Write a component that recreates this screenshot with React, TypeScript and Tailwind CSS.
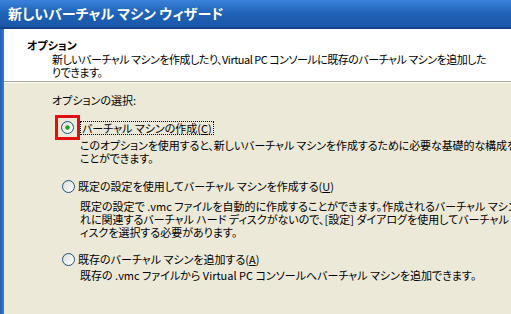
import React from "react";

const font = { fontFamily: '"Noto Sans CJK JP", "Noto Sans", sans-serif', fontFeatureSettings: '"palt"' };

function Radio({ checked }: { checked?: boolean }) {
  return (
    <svg width="13" height="13" viewBox="0 0 13 13">
      <defs>
        <linearGradient id="rg" x1="0" y1="0" x2="1" y2="1">
          <stop offset="0" stopColor="#dcdcd6" />
          <stop offset="1" stopColor="#ffffff" />
        </linearGradient>
      </defs>
      <circle cx="6.5" cy="6.5" r="6" fill="url(#rg)" stroke="#1c5180" strokeWidth="1" />
      {checked && <circle cx="6.5" cy="6.5" r="2.3" fill="#21a121" />}
    </svg>
  );
}

export default function App() {
  return (
    <div className="w-[511px] h-[314px] overflow-hidden flex flex-col bg-[#ece9d8] text-[11px] leading-[13px] text-black" style={font}>
      <div className="h-[29px] shrink-0 flex items-center pl-[8px] bg-gradient-to-b from-[#3a82dc] via-[#1f62b6] to-[#1a57a8] border-b-[2px] border-[#15408a]">
        <span className="text-white font-bold text-[14px]">新しいバーチャル マシン ウィザード</span>
      </div>
      <div className="flex flex-1 min-h-0">
        <div className="w-[4px] shrink-0 bg-gradient-to-r from-[#1f5fb8] to-[#3a7ad0]" />
        <div className="flex-1 flex flex-col min-w-0">
          <div className="h-[53px] bg-white shrink-0 pt-[10px] pl-[23px] border-b border-[#a6a397] whitespace-nowrap">
            <div className="font-bold">オプション</div>
            <div className="pl-[25px] mt-[1px] tracking-[-0.5px]">
              <div>新しいバーチャル マシンを作成したり、Virtual PC コンソールに既存のバーチャル マシンを追加した</div>
              <div>りできます。</div>
            </div>
          </div>
          <div className="border-t border-white flex-1 pl-[48px] pt-[11px] whitespace-nowrap">
            <div>オプションの選択:</div>
            <div className="mt-[8px] flex items-center">
              <div className="w-[25px] h-[25px] border-[3px] border-[#e01010] flex items-center justify-center ml-[3px]">
                <Radio checked />
              </div>
              <span className="ml-[0px] border border-dotted border-black px-[1px] leading-[12px]">バーチャル マシンの作成(<span className="underline">C</span>)</span>
            </div>
            <div className="pl-[28px] -mt-[1px] tracking-[-0.1px]">
              <div>このオプションを使用すると、新しいバーチャル マシンを作成するために必要な基礎的な構成を</div>
              <div>ことができます。</div>
            </div>
            <div className="mt-[15px] flex items-center pl-[10px]">
              <Radio />
              <span className="ml-[3px]">既定の設定を使用してバーチャル マシンを作成する(<span className="underline">U</span>)</span>
            </div>
            <div className="pl-[28px] mt-[7px]">
              <div>既定の設定で .vmc ファイルを自動的に作成することができます。作成されるバーチャル マシン</div>
              <div>れに関連するバーチャル ハード ディスクがないので、[設定] ダイアログを使用してバーチャル ハ</div>
              <div>ィスクを選択する必要があります。</div>
            </div>
            <div className="mt-[14px] flex items-center pl-[10px]">
              <Radio />
              <span className="ml-[3px]">既存のバーチャル マシンを追加する(<span className="underline">A</span>)</span>
            </div>
            <div className="pl-[28px] mt-[3px]">
              <div>既存の .vmc ファイルから Virtual PC コンソールへバーチャル マシンを追加できます。</div>
            </div>
          </div>
        </div>
      </div>
    </div>
  );
}
